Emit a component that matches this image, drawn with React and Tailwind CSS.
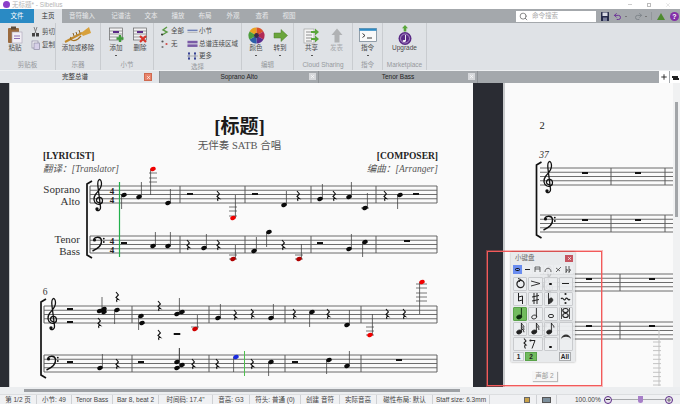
import React from "react";
import { Search, Undo2, Redo2, Plus, X } from "lucide-react";

const LINE = 4.25;

function Staff({ x1, x2, y, bars = [] }) {
  return (
    <g stroke="#5c5c5c" strokeWidth="0.9">
      {[0, 1, 2, 3, 4].map((i) => (
        <line key={i} x1={x1} x2={x2} y1={y + i * LINE} y2={y + i * LINE} />
      ))}
      {bars.map((b) => (
        <line key={b} x1={b} x2={b} y1={y} y2={y + 4 * LINE} strokeWidth="1" />
      ))}
    </g>
  );
}

function Note({ x, y, end, c = "#0a0a0a" }) {
  const sx = end < y ? x + 2.4 : x - 2.4;
  return (
    <g>
      <line x1={sx} x2={sx} y1={y} y2={end} stroke="#444" strokeWidth="0.8" />
      <ellipse cx={x} cy={y} rx="2.8" ry="2" transform={`rotate(-20 ${x} ${y})`} fill={c} />
    </g>
  );
}

function Rest({ x, y }) {
  return (
    <path
      d={`M${x - 1} ${y - 5} L${x + 1.4} ${y - 2} L${x - 1} ${y + 0.5} L${x + 1.4} ${y + 2.5} Q${x - 1.4} ${y + 2} ${x} ${y + 5}`}
      fill="none"
      stroke="#111"
      strokeWidth="1.1"
    />
  );
}

function Block({ x, y }) {
  return <rect x={x - 3} y={y - 1} width="6" height="2" fill="#111" />;
}

function Ledgers({ x1, x2, ys }) {
  return (
    <g stroke="#555" strokeWidth="0.8">
      {ys.map((y) => (
        <line key={y} x1={x1} x2={x2} y1={y} y2={y} />
      ))}
    </g>
  );
}

function TrebleClef({ x, y }) {
  return (
    <g transform={`translate(${x} ${y})`}>
      <path
        d="M7 23.5C4 24 2.5 21.5 4 19.5C5.5 17.5 9 18 9.5 21C10 24.5 6.5 26 4 25C.5 23.5 0 19 2.5 15.5C5 12 8.5 9.5 8.5 5C8.5 2.5 7.5 .5 6.5 .5C5 1 4.5 4 5 8L7.5 28C8 31 5 32.5 3.5 31"
        fill="none"
        stroke="#111"
        strokeWidth="1.3"
      />
      <circle cx="4" cy="30" r="1.7" fill="#111" />
    </g>
  );
}

function BassClef({ x, y }) {
  return (
    <g transform={`translate(${x} ${y})`}>
      <path d="M1.5 3.5C3 .5 9 0 9.5 4.5C10 9 5 13 .5 15" fill="none" stroke="#111" strokeWidth="1.4" />
      <circle cx="2.5" cy="4" r="1.6" fill="#111" />
      <circle cx="11.8" cy="2.6" r="0.9" fill="#111" />
      <circle cx="11.8" cy="6" r="0.9" fill="#111" />
    </g>
  );
}

function Bracket({ x, y1, y2 }) {
  return (
    <path
      d={`M${x + 6} ${y1}L${x + 1} ${y1 + 3}V${y2 - 3}L${x + 6} ${y2}`}
      fill="none"
      stroke="#111"
      strokeWidth="1.7"
    />
  );
}

function TimeSig({ x, y }) {
  return (
    <g fontFamily="'Liberation Serif',serif" fontWeight="700" fontSize="9" textAnchor="middle" fill="#222">
      <text x={x} y={y + 8}>4</text>
      <text x={x} y={y + 16.5}>4</text>
    </g>
  );
}

function Label({ x, y, children }) {
  return (
    <text x={x} y={y} textAnchor="end" fontFamily="'Liberation Serif',serif" fontSize="11" fill="#333">
      {children}
    </text>
  );
}

const sys1Notes = [
  [124, 194, 208], [139, 196, 181], [153, 168, 194, "#f00000"], [168, 202, 188],
  [233, 217, 194, "#f00000"], [284, 204, 190], [320, 198, 183], [349, 196, 181],
  [365, 207, 192], [400, 194, 208],
  [153, 245, 231], [168, 245, 231], [204, 247, 233], [233, 258, 244, "#b00000"],
  [254, 250, 236], [269, 231, 246], [299, 258, 243, "#b00000"], [349, 248, 233], [365, 241, 256],
];
const sys1Rests = [[218, 195], [298, 195], [334, 195], [385, 195], [188, 244], [218, 244], [283, 244]];
const sys1Blocks = [[190, 193], [255, 193], [416, 193], [124, 242], [320, 242], [407, 240]];

const sys2Notes = [
  [99.6, 310, 296], [104, 308, 308], [104, 311, 311], [117, 309, 323], [141, 315, 329], [142, 322, 322],
  [177, 313, 297], [182, 311, 311], [195, 328, 314, "#d00000"], [218, 317, 303], [271, 317, 303],
  [312, 311, 326], [347, 324, 309], [370, 334, 313, "#f00000"], [422, 281, 313, "#f00000"],
  [100, 367, 353], [177, 361, 347], [182, 364, 364], [177, 367, 347], [236, 356, 371, "#1a2be0"],
  [271, 361, 375], [329, 359, 373], [347, 365, 350],
];
const sys2Rests = [
  [99, 322], [117, 296], [159, 305], [159, 334], [235, 314], [252, 313], [294, 313], [328, 313],
  [387, 313], [404, 313], [117, 363], [193, 363], [217, 363], [252, 363],
];
const sys2Blocks = [[70, 308], [70, 321], [177, 333], [70, 361], [141, 361], [295, 361], [399, 359]];

function SystemOne() {
  return (
    <svg viewBox="10 175 463 95" className="w-[463px] h-[95px] block overflow-visible">
      <Label x={80} y={192}>Soprano</Label>
      <Label x={80} y={204}>Alto</Label>
      <Label x={80} y={242}>Tenor</Label>
      <Label x={80} y={254}>Bass</Label>
      <Bracket x={86} y1={180} y2={257} />
      <Staff x1={90} x2={437} y={185} bars={[90, 180, 245, 311, 376, 437]} />
      <Staff x1={90} x2={437} y={235} bars={[90, 180, 245, 311, 376, 437]} />
      <TrebleClef x={93} y={178} />
      <BassClef x={92} y={235} />
      <TimeSig x={112} y={185} />
      <TimeSig x={112} y={235} />
      <line x1={119.5} x2={119.5} y1={181} y2={256} stroke="#22b14c" strokeWidth="1.2" />
      <Ledgers x1={149} x2={157} ys={[172, 177, 181]} />
      <Ledgers x1={229} x2={237} ys={[206, 210, 215]} />
      <Ledgers x1={361} x2={369} ys={[207]} />
      <Ledgers x1={229} x2={237} ys={[254, 258]} />
      <Ledgers x1={295} x2={303} ys={[254, 258]} />
      {sys1Notes.map(([x, y, end, c], i) => <Note key={i} x={x} y={y} end={end} c={c} />)}
      {sys1Rests.map(([x, y], i) => <Rest key={i} x={x} y={y} />)}
      {sys1Blocks.map(([x, y], i) => <Block key={i} x={x} y={y} />)}
    </svg>
  );
}

function SystemTwo() {
  return (
    <svg viewBox="10 270 463 117" className="w-[463px] h-[117px] block overflow-visible">
      <text x={45} y={294} textAnchor="middle" fontFamily="'Liberation Serif',serif" fontSize="9.5" fill="#333">6</text>
      <Bracket x={40} y1={298} y2={377} />
      <Staff x1={44} x2={437} y={305} bars={[44, 132, 209, 285, 361, 437]} />
      <Staff x1={44} x2={437} y={354} bars={[44, 132, 209, 285, 361, 437]} />
      <TrebleClef x={47} y={297} />
      <BassClef x={46} y={354} />
      <line x1={244.5} x2={244.5} y1={350} y2={375} stroke="#4fc04f" strokeWidth="1" />
      <Ledgers x1={173} x2={181} ys={[333]} />
      <Ledgers x1={191} x2={199} ys={[326]} />
      <Ledgers x1={366} x2={374} ys={[326, 330, 334]} />
      <Ledgers x1={416} x2={427} ys={[283, 287, 292, 296, 300]} />
      {sys2Notes.map(([x, y, end, c], i) => <Note key={i} x={x} y={y} end={end} c={c} />)}
      {sys2Rests.map(([x, y], i) => <Rest key={i} x={x} y={y} />)}
      {sys2Blocks.map(([x, y], i) => <Block key={i} x={x} y={y} />)}
    </svg>
  );
}

function RightPage() {
  return (
    <svg viewBox="505 83 168 304" className="w-[168px] h-[304px] block">
      <text x={542} y={129} textAnchor="middle" fontFamily="'Liberation Serif',serif" fontSize="10.5" fill="#222">2</text>
      <text x={544} y={158} textAnchor="middle" fontFamily="'Liberation Serif',serif" fontStyle="italic" fontSize="9.5" fill="#333">37</text>
      <Bracket x={535.5} y1={162} y2={238} />
      <Staff x1={540} x2={673} y={168} bars={[611, 665]} />
      <Staff x1={540} x2={673} y={215} bars={[611, 665]} />
      <TrebleClef x={543} y={161} />
      <BassClef x={543} y={215} />
      {[585, 638].map((x) => <Block key={x} x={x} y={173} />)}
      {[585, 638].map((x) => <Block key={x} x={x} y={220} />)}
      <Staff x1={540} x2={673} y={274} bars={[620]} />
      <Staff x1={540} x2={673} y={322} bars={[620]} />
      <TrebleClef x={543} y={266} />
      <BassClef x={543} y={322} />
      {[589, 652].map((x) => <Block key={x} x={x} y={279} />)}
      {[589, 652].map((x) => <Block key={x} x={x} y={326} />)}
      <line x1={659} x2={659} y1={330} y2={386} stroke="#c4c4c4" />
      <g stroke="#bdbdbd" strokeWidth="0.9">
        {[342, 346.3, 350.6, 355, 359.3, 363.6, 368, 372.3, 376.6, 381, 385].map((y) => (
          <line key={y} x1={653} x2={661} y1={y} y2={y} />
        ))}
      </g>
    </svg>
  );
}

/* ribbon icons */
const PasteIcon = () => (
  <svg width="16" height="18" viewBox="0 0 16 18">
    <rect x="1" y="2" width="11" height="15" rx="1" fill="#9a6a3e" />
    <rect x="4" y="0.5" width="5" height="3" fill="#5c4a38" />
    <rect x="5" y="6" width="10" height="11" fill="#f1eef4" stroke="#a9a0b5" strokeWidth="0.6" />
    <path d="M7 10h6M7 12.5h6" stroke="#8d6fb5" />
  </svg>
);
const ScissorsIcon = () => (
  <svg width="9" height="10" viewBox="0 0 9 10">
    <path d="M3 0l2 6M6 0L4 6" stroke="#777" strokeWidth="0.9" />
    <rect x="1" y="6" width="3" height="3.5" fill="#444" />
    <rect x="5" y="6" width="3" height="3.5" fill="#444" />
  </svg>
);
const CopyIcon = () => (
  <svg width="9" height="10" viewBox="0 0 9 10">
    <rect x="1" y="1" width="6" height="7" fill="#f3f2f6" stroke="#8e8aa3" strokeWidth="0.7" />
    <rect x="3" y="3" width="5.5" height="6.5" fill="#d6cfe8" stroke="#8e8aa3" strokeWidth="0.7" />
  </svg>
);
const TrumpetIcon = () => (
  <svg width="28" height="18" viewBox="0 0 28 18">
    <path d="M1 16L18 7" stroke="#c28a2c" strokeWidth="2" />
    <path d="M17 7L25 1L27 7L19 10Z" fill="#d8a13c" />
    <path d="M7 11c-2 3 3 5 7 2l3-3" fill="none" stroke="#a8741f" strokeWidth="1.3" />
    <path d="M9 7l1 3M12 6l1 3M15 4l1 3" stroke="#8e621c" strokeWidth="1" />
  </svg>
);
const BarIcon = ({ del }) => (
  <svg width="17" height="16" viewBox="0 0 17 16">
    <rect x="1.5" y="1" width="13" height="12" fill="#f1f1f3" stroke="#666" strokeWidth="0.7" />
    <path d="M1.5 4h13M1.5 7h13M1.5 10h13" stroke="#777" strokeWidth="0.7" />
    <rect x="5" y="4" width="6" height="2" fill="#5b2a86" />
    {del ? (
      <path d="M8 9l6 6M14 9l-6 6" stroke="#d8352a" strokeWidth="2.2" />
    ) : (
      <path d="M12 8v7M8.5 11.5h7" stroke="#3f9b3a" strokeWidth="2.4" />
    )}
  </svg>
);
const AllIcon = () => (
  <svg width="9" height="10" viewBox="0 0 9 10">
    <path d="M2 9l5-3-4-2 4-3" fill="none" stroke="#5b9a45" strokeWidth="1.4" />
    <circle cx="2" cy="8.5" r="1" fill="#333" />
  </svg>
);
const NoneIcon = () => (
  <svg width="9" height="10" viewBox="0 0 9 10">
    <circle cx="2.5" cy="2.5" r="1.1" fill="#555" />
    <circle cx="6.5" cy="5" r="1.1" fill="#d24b45" />
    <circle cx="2.5" cy="8" r="1.1" fill="#777" />
  </svg>
);
const BarsIcon = ({ thick }) => (
  <svg width="12" height="8" viewBox="0 0 12 8">
    {thick ? (
      <>
        <rect x="0.5" y="0.5" width="11" height="2.8" fill="#7a5aa6" />
        <rect x="0.5" y="4.4" width="11" height="2.8" fill="#7a5aa6" />
      </>
    ) : (
      <>
        <rect x="0.5" y="2.5" width="11" height="1.6" fill="#6f80b8" />
        <rect x="0.5" y="5" width="11" height="0.8" fill="#aaa" />
      </>
    )}
  </svg>
);
const MoreIcon = () => (
  <svg width="11" height="10" viewBox="0 0 11 10">
    <path d="M2 1v8M8 1v8" stroke="#5560a8" strokeWidth="0.9" />
    <path d="M0 5h11" stroke="#999" strokeWidth="0.7" />
    <circle cx="2" cy="2.5" r="1" fill="#2e3a8f" />
    <circle cx="8" cy="7.5" r="1" fill="#2e3a8f" />
    <circle cx="2" cy="7.5" r="1" fill="#2e3a8f" />
    <circle cx="8" cy="2.5" r="1" fill="#2e3a8f" />
  </svg>
);
function WheelIcon() {
  const cols = ["#e9a21f", "#d9532a", "#b22a55", "#5a2d91", "#2a5ea8", "#4c9c3c"];
  return (
    <svg width="17" height="17" viewBox="-8.5 -8.5 17 17">
      {cols.map((c, i) => {
        const a1 = ((i * 60 - 60) * Math.PI) / 180;
        const a2 = ((i * 60) * Math.PI) / 180;
        return (
          <path
            key={c}
            d={`M0 0L${8 * Math.sin(a1)} ${-8 * Math.cos(a1)}A8 8 0 0 1 ${8 * Math.sin(a2)} ${-8 * Math.cos(a2)}Z`}
            fill={c}
          />
        );
      })}
      <circle r="2.4" fill="#3a2a4a" />
    </svg>
  );
}
const GoIcon = () => (
  <svg width="15" height="13" viewBox="0 0 15 13">
    <path d="M1 4h7V0.5l6.5 6L8 12.5V9H1Z" fill="#6aa53c" stroke="#4c7f2a" strokeWidth="0.5" />
  </svg>
);
const ShareIcon = () => (
  <svg width="17" height="17" viewBox="0 0 17 17">
    <rect x="1" y="2" width="10" height="14" fill="#f5f5f5" stroke="#999" strokeWidth="0.6" />
    <path d="M3 5h6M3 8h6M3 11h6M3 14h6" stroke="#777" strokeWidth="0.8" />
    <path d="M8 4h4V1.5l4 3.5-4 3.5V6H8Z" fill="#5aa63c" />
    <path d="M8 11h4V8.5l4 3.5-4 3.5V13H8Z" fill="#5aa63c" />
  </svg>
);
const PublishIcon = () => (
  <svg width="12" height="15" viewBox="0 0 12 15">
    <path d="M6 .5L11.5 7H8.5V14.5H3.5V7H.5Z" fill="#b0b2b4" />
  </svg>
);
const CommandIcon = () => (
  <svg width="18" height="14" viewBox="0 0 18 14">
    <rect x="0.5" y="0.5" width="17" height="13" fill="#fafafa" stroke="#6b7c8a" strokeWidth="0.7" />
    <rect x="0.5" y="0.5" width="17" height="2.3" fill="#2d8bc6" />
    <path d="M3.5 5.5l2.5 2-2.5 2" fill="none" stroke="#222" strokeWidth="0.9" />
    <path d="M8 10h5" stroke="#222" strokeWidth="0.9" />
  </svg>
);
const UpgradeIcon = () => (
  <svg width="14" height="21" viewBox="0 0 14 21">
    <path d="M7 0L10 3.2H8.3V6.5H5.7V3.2H4Z" fill="#5aa63c" />
    <circle cx="7" cy="13.5" r="6.5" fill="#5a2a86" />
    <circle cx="7" cy="13.5" r="4.5" fill="none" stroke="#cdb8e0" strokeWidth="0.7" />
    <path d="M7.5 10v6" stroke="#fff" strokeWidth="0.9" />
    <ellipse cx="6.2" cy="16" rx="1.6" ry="1.1" fill="#fff" />
  </svg>
);

function BigBtn({ w, label, icon, arrow, dim }) {
  return (
    <div className={`${w} flex flex-col items-center`}>
      <div className="h-[20px] mt-[2px] flex items-center justify-center">{icon}</div>
      <div className={`h-[8px] mt-[-1px] leading-[8px] whitespace-nowrap ${dim ? "text-[#a9abae]" : "text-[#4a4a4a]"}`}>{label}</div>
      {arrow && <div className="h-[1px] w-[2px] mt-[3px] bg-[#555]" />}
    </div>
  );
}

function SmallBtn({ icon, label }) {
  return (
    <div className="h-[12.5px] flex items-center">
      <div className="w-[11px] flex justify-center mr-[1px]">{icon}</div>
      <span className="text-[#4a4a4a] whitespace-nowrap">{label}</span>
    </div>
  );
}

function Group({ w, label, children, className = "" }) {
  return (
    <div className={`${w} h-full flex flex-col border-r border-[#c9ccd0]`}>
      <div className={`flex-1 flex ${className}`}>{children}</div>
      <div className="h-[9px] leading-[7px] text-center text-[#96999d] whitespace-nowrap">{label}</div>
    </div>
  );
}

const tabs = [
  ["文件", "w-[34px] bg-[#2a8ac4] text-white"],
  ["主页", "w-[28px] bg-[#dfe2e6] text-[#333]"],
  ["音符输入", "w-[40px] text-[#e8e9ea]"],
  ["记谱法", "w-[38px] text-[#e8e9ea]"],
  ["文本", "w-[22px] text-[#e8e9ea]"],
  ["播放", "w-[32px] text-[#e8e9ea]"],
  ["布局", "w-[22px] text-[#e8e9ea]"],
  ["外观", "w-[34px] text-[#e8e9ea]"],
  ["查看", "w-[24px] text-[#e8e9ea]"],
  ["视图", "w-[30px] text-[#e8e9ea]"],
];

const statusCells = [
  ["第 1/2 页", "w-[37px]"],
  ["小节: 49", "w-[35px]"],
  ["Tenor Bass", "w-[41px]"],
  ["Bar 8, beat 2", "w-[46px]"],
  ["时间码: 17.4\"", "w-[54px]"],
  ["音高: G3", "w-[37px]"],
  ["符头: 普通 (0)", "w-[51px]"],
  ["创建 音符", "w-[39px]"],
  ["实际音高", "w-[37px]"],
  ["磁性布局: 默认", "w-[56px]"],
  ["Staff size: 6.3mm", "w-[57px]"],
];

/* keypad pieces */
function KeyNote({ flags = 0, hollow, dark }) {
  const c = dark ? "#0d2a0d" : "#222";
  return (
    <svg width="11" height="13" viewBox="0 0 11 13">
      <line x1="6.4" x2="6.4" y1="1" y2="10" stroke={c} strokeWidth="0.9" />
      {[0, 1, 2].slice(0, flags).map((i) => (
        <path key={i} d={`M6.4 ${1 + i * 2.4}c.5 2 3 2.5 2.5 4.5`} fill="none" stroke={c} strokeWidth="1" />
      ))}
      <ellipse cx="4.2" cy="10" rx="2.6" ry="1.9" transform="rotate(-20 4.2 10)" fill={hollow ? "none" : c} stroke={c} strokeWidth="0.8" />
    </svg>
  );
}

function Glyph({ children, w = 11, h = 13 }) {
  return (
    <svg width={w} height={h} viewBox={`0 0 ${w} ${h}`}>
      {children}
    </svg>
  );
}

function KKey({ children, green, className = "" }) {
  return (
    <div className={`flex items-center justify-center rounded-[1px] border ${green ? "bg-[#72bb5e] border-[#5aa34a]" : "bg-[#eef0f2]/70 border-[#c9cbce]"} ${className}`}>
      {children}
    </div>
  );
}

function Keypad() {
  return (
    <div className="absolute left-[6px] top-[-142px] w-[64px] h-[110px] bg-[#e4e6e9]/85 shadow-[0_0_2px_rgba(0,0,0,0.35)] px-[1px]">
      <div className="h-[12px] flex items-center justify-between pl-[3px] pr-[1px] text-[#666]">
        <span>小键盘</span>
        <div className="w-[8px] h-[7px] bg-[#c55560] flex items-center justify-center">
          <X size={5} color="#fff" strokeWidth={3} />
        </div>
      </div>
      <div className="h-[9px] mt-[1px] grid grid-cols-6 gap-[1px] px-[1px]">
        <div className="bg-[#6a8df0] flex items-center justify-center">
          <div className="w-[5px] h-[3.5px] rounded-full border-[1.3px] border-[#111]" />
        </div>
        <div className="flex items-center justify-center bg-[#eef0f2]/70"><div className="w-[5px] h-[1.5px] bg-[#222]" /></div>
        <div className="flex items-center justify-center bg-[#eef0f2]/70"><Glyph w={7} h={7}><path d="M1 1h5M1 3h5M1 1v5M6 1v5" stroke="#444" strokeWidth="0.8" fill="none" /></Glyph></div>
        <div className="flex items-center justify-center bg-[#eef0f2]/70"><Glyph w={8} h={7}><path d="M1 6C1 1 7 1 7 6" stroke="#444" strokeWidth="0.8" fill="none" /></Glyph></div>
        <div className="flex items-center justify-center bg-[#eef0f2]/70"><Glyph w={7} h={7}><path d="M1 6L6 1M1 2l4 3" stroke="#444" strokeWidth="0.8" fill="none" /></Glyph></div>
        <div className="flex items-center justify-center bg-[#eef0f2]/70"><Glyph w={8} h={8}><path d="M2 0v7M5 0v7M2 6c2-2 2-3 0-2M5 6c2-2 2-3 0-2" stroke="#333" strokeWidth="0.8" fill="none" /></Glyph></div>
      </div>
      <div className="mt-[3px] grid grid-cols-4 gap-x-[1px] gap-y-[1.5px] auto-rows-[13.5px] px-[1px]">
        <KKey><Glyph><circle cx="5.5" cy="7" r="3.6" fill="none" stroke="#222" strokeWidth="1.2" /><path d="M3 1.5l3 1-2 2.5" fill="none" stroke="#222" strokeWidth="1" /></Glyph></KKey>
        <KKey><Glyph><path d="M1 4l9 2.5L1 9" fill="none" stroke="#222" strokeWidth="0.9" /></Glyph></KKey>
        <KKey><div className="w-[2.5px] h-[2.5px] rounded-full bg-[#111]" /></KKey>
        <KKey><div className="w-[7px] h-[1.2px] bg-[#222]" /></KKey>
        <KKey><Glyph><path d="M3.5 1v8l4-1M7.5 4v8M3.5 5l4-1" fill="none" stroke="#222" strokeWidth="1" /></Glyph></KKey>
        <KKey><Glyph><path d="M4 1v11M7 1v11M2 5l7-1.5M2 9l7-1.5" fill="none" stroke="#222" strokeWidth="1" /></Glyph></KKey>
        <KKey><Glyph><path d="M3.5 1v11c3-1.5 5-3 4-5s-3-.5-4 1" fill="#333" stroke="#222" strokeWidth="0.9" /></Glyph></KKey>
        <KKey><Glyph><circle cx="5.5" cy="2" r="1.1" fill="#222" /><path d="M1 7c2-3 3 3 4.5 0s3 3 4.5 0" stroke="#222" strokeWidth="1.1" fill="none" /><circle cx="5.5" cy="11" r="1.1" fill="#222" /></Glyph></KKey>
        <KKey green><KeyNote dark /></KKey>
        <KKey><KeyNote hollow /></KKey>
        <KKey><div className="w-[6px] h-[4px] mt-[5px] rounded-full border-[1.2px] border-[#333]" /></KKey>
        <KKey><Glyph><ellipse cx="5.5" cy="3.5" rx="2.7" ry="2" fill="none" stroke="#222" strokeWidth="1.2" /><ellipse cx="5.5" cy="8.5" rx="2.7" ry="2" fill="none" stroke="#222" strokeWidth="1.2" /><path d="M1.5 1v11M9.5 1v11" stroke="#222" strokeWidth="0.8" /></Glyph></KKey>
        <KKey><KeyNote flags={3} /></KKey>
        <KKey><KeyNote flags={2} /></KKey>
        <KKey><KeyNote flags={1} /></KKey>
        <KKey className="row-span-2"><Glyph w={12} h={9}><path d="M1 7C2 1 10 1 11 7C9 4 3 4 1 7Z" fill="#333" /></Glyph></KKey>
        <KKey className="col-span-2">
          <Glyph w={18} h={13}><path d="M5 1.5L7 4 5 6l2 2c-2 0-1.5 2-.5 3.5" fill="none" stroke="#222" strokeWidth="1.1" /><path d="M11 3.5h5l-3 8" fill="none" stroke="#222" strokeWidth="1" /><circle cx="11.5" cy="3.5" r="1.1" fill="#222" /></Glyph>
        </KKey>
        <KKey><div className="w-[2.5px] h-[2.5px] mt-[6px] rounded-full bg-[#111]" /></KKey>
      </div>
      <div className="h-[9px] mt-[1.5px] px-[1px] flex font-bold text-[#222] leading-[8px]">
        <div className="w-[11px] bg-[#eef0f2] border border-[#c9cbce] text-center">1</div>
        <div className="w-[12px] ml-[1px] bg-[#72bb5e] border border-[#5aa34a] text-center">2</div>
        <div className="w-[12px] ml-auto mr-[2px] bg-[#eef0f2] border border-[#a9abad] text-center">All</div>
      </div>
    </div>
  );
}

export default function App() {
  return (
    <div className="w-[680px] h-[404px] overflow-hidden flex flex-col bg-[#f0f1f3] text-[6.5px] font-['Liberation_Sans','Noto_Sans_CJK_SC',sans-serif]">
      {/* title bar */}
      <div className="h-[9px] bg-white flex items-center px-[3px] relative overflow-hidden">
        <div className="w-[7px] h-[7px] rounded-full bg-[#8b3fc9]" />
        <span className="ml-[2px] text-[#b4b4b4]">无标题* - Sibelius</span>
        <div className="ml-auto flex items-center text-[#bbb]">
          <div className="w-[4px] h-[1px] bg-[#ccc] mr-[15px]" />
          <div className="w-[4px] h-[4px] border border-[#bbb] mr-[14px]" />
          <X size={6} strokeWidth={1.5} className="mr-[6px]" />
        </div>
      </div>

      {/* ribbon tabs */}
      <div className="h-[14px] bg-[#a4a8ac] flex items-stretch">
        {tabs.map(([t, cls]) => (
          <div key={t} className={`${cls} flex items-center justify-center`}>{t}</div>
        ))}
        <div className="w-[292px] flex items-center justify-end">
          <div className="w-[80px] h-[11px] bg-white flex items-center pl-[3px] text-[#a9a9a9]">
            <Search size={9} color="#666" />
            <span className="ml-[4px]">命令搜索</span>
          </div>
        </div>
        <div className="flex-1 flex items-center pl-[5px]">
          <svg width="8" height="9" viewBox="0 0 8 9">
            <rect width="8" height="9" rx="0.5" fill="#262b4a" />
            <rect x="1.5" y="0.5" width="5" height="3.5" fill="#d9dbe5" />
            <rect x="2" y="5.5" width="4" height="3.5" fill="#7a7f9c" />
          </svg>
          <Undo2 size={9} color="#6b2f96" strokeWidth={2.5} className="ml-[4px]" />
          <div className="w-[2px] h-[1px] bg-[#777] ml-[3px]" />
          <Redo2 size={9} color="#7d8389" strokeWidth={2.5} className="ml-[7px]" />
          <div className="w-[2px] h-[1px] bg-[#777] ml-[2px]" />
          <div className="w-[1px] h-[8px] bg-[#92969a] ml-[4px]" />
          <div className="ml-[5px] w-0 h-0 border-x-[4px] border-x-transparent border-b-[7px] border-b-[#4d8a2e]" />
          <div className="ml-[5px] w-[9px] h-[9px] rounded-full bg-[#8430a8] text-white text-[7px] font-bold leading-[9px] text-center">?</div>
        </div>
      </div>

      {/* ribbon */}
      <div className="h-[47px] bg-[#dfe2e6] flex">
        <Group w="w-[56px]" label="剪贴板">
          <BigBtn w="w-[30px]" label="粘贴" icon={<PasteIcon />} />
          <div className="pt-[3px]">
            <SmallBtn icon={<ScissorsIcon />} label="剪切" />
            <SmallBtn icon={<CopyIcon />} label="复制" />
          </div>
        </Group>
        <Group w="w-[45px]" label="乐器">
          <BigBtn w="w-full" label="添加或移除" icon={<TrumpetIcon />} />
        </Group>
        <Group w="w-[53px]" label="小节" className="pl-[3px]">
          <BigBtn w="w-[24px]" label="添加" arrow icon={<BarIcon />} />
          <BigBtn w="w-[24px]" label="删除" icon={<BarIcon del />} />
        </Group>
        <Group w="w-[88px]" label="选择" className="pl-[5px]">
          <div className="w-[28px] pt-[2px]">
            <SmallBtn icon={<AllIcon />} label="全部" />
            <SmallBtn icon={<NoneIcon />} label="无" />
          </div>
          <div className="pt-[2px]">
            <SmallBtn icon={<BarsIcon />} label="小节" />
            <SmallBtn icon={<BarsIcon thick />} label="总谱连续区域" />
            <SmallBtn icon={<MoreIcon />} label="更多" />
          </div>
        </Group>
        <Group w="w-[52px]" label="编辑" className="pl-[2px]">
          <BigBtn w="w-[24px]" label="颜色" arrow icon={<WheelIcon />} />
          <BigBtn w="w-[24px]" label="转到" arrow icon={<GoIcon />} />
        </Group>
        <Group w="w-[59px]" label="Cloud Sharing" className="pl-[5px]">
          <BigBtn w="w-[25px]" label="共享" arrow icon={<ShareIcon />} />
          <BigBtn w="w-[25px]" label="发表" dim icon={<PublishIcon />} />
        </Group>
        <Group w="w-[30px]" label="指令">
          <BigBtn w="w-full" label="指令" arrow icon={<CommandIcon />} />
        </Group>
        <Group w="w-[44px]" label="Marketplace">
          <BigBtn w="w-full" label="Upgrade" icon={<UpgradeIcon />} />
        </Group>
      </div>

      {/* document tabs */}
      <div className="h-[13px] bg-[#a4a8ac] flex text-[#333] border-t border-[#eef0f2]">
        <div className="w-[159px] bg-[#e2e5e9] flex items-center relative">
          <span className="ml-[62px]">完整总谱</span>
          <div className="absolute left-[144px] top-[2px] w-[8px] h-[8px] bg-[#e9846c] border border-[#cf6a50] flex items-center justify-center">
            <X size={5} color="#fff" strokeWidth={3} />
          </div>
        </div>
        <div className="w-[159px] flex items-center justify-center relative border-l border-[#8e9296] text-[#222]">
          Soprano Alto
          <div className="absolute right-[2px] top-[2px] w-[7px] h-[7px] bg-[#d6d8db] flex items-center justify-center"><X size={5} color="#fff" strokeWidth={3} /></div>
        </div>
        <div className="w-[160px] flex items-center justify-center relative border-x border-[#8e9296] text-[#222]">
          Tenor Bass
          <div className="absolute right-[2px] top-[2px] w-[7px] h-[7px] bg-[#d6d8db] flex items-center justify-center"><X size={5} color="#fff" strokeWidth={3} /></div>
        </div>
        <div className="flex-1 flex justify-end">
          <div className="w-[10px] bg-white flex items-center justify-center"><Plus size={8} color="#111" strokeWidth={2.5} /></div>
          <div className="w-[10px] ml-[1px] bg-white flex items-center justify-center">
            <div className="w-[6px] h-[2px] bg-[#222] shadow-[1px_2px_0_#222]" />
          </div>
        </div>
      </div>

      {/* score area */}
      <div className="h-[304px] flex bg-[#2a2c33]">
        <div className="w-[9px]" />
        <div className="w-[464px] bg-[#fafafa] border-l border-[#c9cbcd] flex flex-col font-['Liberation_Serif','Noto_Sans_CJK_SC',serif]">
          <div className="mt-[32px] h-[24px] leading-[24px] text-center text-[19px] font-bold text-[#1a1a1a] -ml-[4px]">[标题]</div>
          <div className="h-[13px] leading-[14px] text-center text-[10.5px] text-[#555] -ml-[4px]">无伴奏 SATB 合唱</div>
          <div className="-mt-[2px] px-[33px] pr-[35px] flex justify-between text-[#222]">
            <div>
              <div className="h-[12px] leading-[12px] text-[9.5px] font-bold">[LYRICIST]</div>
              <div className="h-[14px] leading-[14px] text-[9.5px] italic text-[#555]">翻译：[Translator]</div>
            </div>
            <div className="text-right">
              <div className="h-[12px] leading-[12px] text-[9.5px] font-bold">[COMPOSER]</div>
              <div className="h-[14px] leading-[14px] text-[9.5px] italic text-[#555]">编曲：[Arranger]</div>
            </div>
          </div>
          <SystemOne />
          <SystemTwo />
        </div>
        <div className="w-[30px]" />
        <div className="w-[2px] bg-[#c9cbcd]" />
        <div className="w-[168px] bg-[#fafafa]">
          <RightPage />
        </div>
        <div className="w-[7px] bg-[#f0f1f2] pl-[2px]">
          <div className="w-[3px] h-[115px] mt-[19px] bg-[#a2a5a8]" />
        </div>
      </div>

      {/* horizontal scrollbar */}
      <div className="h-[7px] bg-[#eceef0] pl-[24px] pt-[2px] relative">
        <div className="w-[436px] h-[3px] bg-[#9da0a4]" />
        <div className="absolute left-[487px] bottom-[8px] w-[115px] h-[135px] border border-[#f25a5a] shadow-[0_0_0_1px_rgba(242,90,90,0.4)]" />
        <div className="absolute left-[505px] bottom-0 w-0 h-0">
          <Keypad />
        </div>
        <div className="absolute left-[532px] bottom-[13px] w-[25px] h-[10px] bg-[#f6f6f6] shadow-[1px_1px_1px_rgba(0,0,0,0.25)] text-center leading-[10px] text-[#999]">声部 2</div>
      </div>

      {/* status bar */}
      <div className="h-[10px] bg-[#f0f1f3] flex items-center text-[#444] border-t border-[#dcdee0]">
        {statusCells.map(([t, w]) => (
          <div key={t} className={`${w} h-full flex items-center justify-center border-r border-[#cfd1d4] whitespace-nowrap overflow-hidden`}>{t}</div>
        ))}
        <div className="w-[47px] h-full border-r border-[#cfd1d4] flex items-center justify-end pr-[6px]">
          <div className="w-[6px] h-[6px] bg-[#c9a24a] border border-[#666]" />
        </div>
        <div className="w-[20px] h-full border-r border-[#cfd1d4] flex items-center justify-center">
          <div className="w-[9px] h-[6px] bg-[#7d8f9c] border border-[#555]" />
        </div>
        <span className="ml-[18px] w-[24px] whitespace-nowrap">100.00%</span>
        <div className="ml-[5px] w-[8px] h-[8px] rounded-full border border-[#5b2a86] bg-[#e8e4ee] flex items-center justify-center">
          <div className="w-[4px] h-[1px] bg-[#333]" />
        </div>
        <div className="relative w-[53px] h-[1px] bg-[#a8aaad]">
          <div className="absolute left-[26px] top-[-3px] w-[5px] h-[7px] bg-[#a77fc8] rounded-b-[3px]" />
        </div>
        <div className="w-[8px] h-[8px] rounded-full border border-[#5b2a86] bg-[#e8e4ee] flex items-center justify-center">
          <Plus size={6} color="#333" strokeWidth={2.5} />
        </div>
      </div>
    </div>
  );
}
